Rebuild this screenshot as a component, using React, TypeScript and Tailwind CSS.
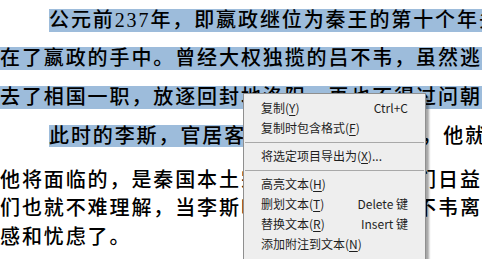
const body = '"Liberation Serif", "Noto Sans CJK SC", serif';
const ui = '"Noto Sans CJK SC", "Noto Sans", sans-serif';

function Key({ k }: { k: string }) {
  return (
    <>
      (<span className="underline underline-offset-2">{k}</span>)
    </>
  );
}

function Item({ label, k, tail, shortcut }: { label: string; k: string; tail?: string; shortcut?: string }) {
  return (
    <div className="flex h-[20px] items-center justify-between pl-[17px] pr-[17px]">
      <span>
        {label}
        <Key k={k} />
        {tail}
      </span>
      {shortcut && <span>{shortcut}</span>}
    </div>
  );
}

function Sep() {
  return (
    <div className="flex h-[8px] items-center px-[1px]">
      <div className="h-px w-full bg-[#a8a8a8]" />
    </div>
  );
}

export default function App() {
  return (
    <div className="relative h-[259px] w-[482px] overflow-hidden bg-white">
      {/* document text */}
      <div
        className="flex flex-col whitespace-nowrap pt-[9px] text-[20px] font-medium leading-[23px] tracking-[1.9px] text-black"
        style={{ fontFamily: body }}
      >
        <div className="h-[38px]">
          <div className="ml-[49px] bg-[#9dbcdb]">公元前237年，即嬴政继位为秦王的第十个年头</div>
        </div>
        <div className="h-[39px]">
          <div className="bg-[#9dbcdb]">在了嬴政的手中。曾经大权独揽的吕不韦，虽然逃</div>
        </div>
        <div className="h-[39px]">
          <div className="bg-[#9dbcdb]">去了相国一职，放逐回封地洛阳，再也不得过问朝</div>
        </div>
        <div className="h-[44px] pl-[49px]">
          <span className="bg-[#9dbcdb]">此时的李斯，官居客卿，</span>深得秦王信任，他就
        </div>
        <div className="h-[28px]">他将面临的，是秦国本土宗室贵族对于客卿们日益</div>
        <div className="h-[29px]">们也就不难理解，当李斯听说秦王要逼迫吕不韦离</div>
        <div className="h-[29px]">感和忧虑了。</div>
      </div>

      {/* context menu */}
      <div
        className="absolute left-[243px] top-[93px] h-[175px] w-[183px] border border-[#8f8f8f] bg-[#eeeeee] pt-[4px] text-[12px] text-[#1e1e1e] shadow-[3px_3px_2px_rgba(0,0,0,0.35)]"
        style={{ fontFamily: ui }}
      >
        <Item label="复制" k="Y" shortcut="Ctrl+C" />
        <Item label="复制时包含格式" k="F" />
        <Sep />
        <Item label="将选定项目导出为" k="X" tail="..." />
        <Sep />
        <Item label="高亮文本" k="H" />
        <Item label="删划文本" k="T" shortcut="Delete 键" />
        <Item label="替换文本" k="R" shortcut="Insert 键" />
        <Item label="添加附注到文本" k="N" />
      </div>
    </div>
  );
}
